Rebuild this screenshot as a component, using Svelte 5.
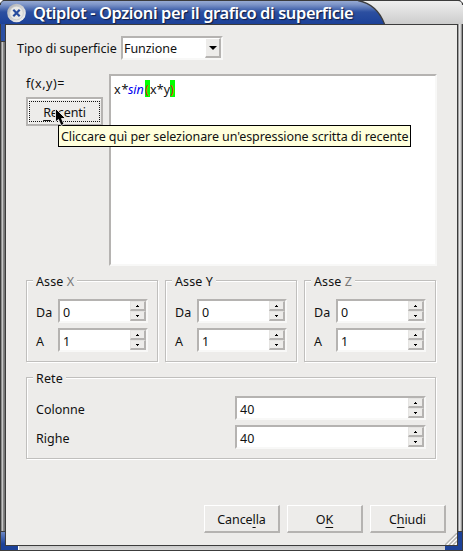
<script>
  const axes = ['X', 'Y', 'Z'];
  const grid = ['Colonne', 'Righe'];
</script>

{#snippet spin(value)}
  <div class="field spin">
    <span class="num">{value}</span>
    <div class="steps">
      <i><svg width="3" height="2" viewBox="0 0 3 2" shape-rendering="crispEdges"><path d="M1 0h1v1h1v1H0V1h1z" /></svg></i>
      <i><svg width="3" height="2" viewBox="0 0 3 2" shape-rendering="crispEdges"><path d="M0 0h3v1H2v1H1V1H0z" /></svg></i>
    </div>
  </div>
{/snippet}

<div class="window">
  <header>
    <svg class="tab" width="463" height="24" viewBox="0 0 463 24">
      <defs>
        <linearGradient id="blue" x1="0" y1="0" x2="0" y2="1">
          <stop offset="0" stop-color="#9eb0d6" />
          <stop offset=".2" stop-color="#7b93c7" />
          <stop offset=".5" stop-color="#2c4fa0" />
          <stop offset="1" stop-color="#1c4198" />
        </linearGradient>
        <linearGradient id="silver" x1="0" y1="0" x2="0" y2="1">
          <stop offset="0" stop-color="#f0f0f0" />
          <stop offset="1" stop-color="#cccccc" />
        </linearGradient>
        <linearGradient id="knob" x1="0" y1="0" x2="1" y2="1">
          <stop offset="0" stop-color="#a8aaae" />
          <stop offset="1" stop-color="#fafafa" />
        </linearGradient>
      </defs>
      <rect width="463" height="24" fill="url(#silver)" />
      <path d="M0 0H358C371 3 380 12 384.500 24H0z" fill="url(#blue)" />
      <path d="M358 .5C371 3 380 12 384.500 24" fill="none" stroke="#3c3c3c" stroke-width="1.300" />
      <circle cx="16.500" cy="13" r="9.300" fill="url(#knob)" />
      <circle cx="16.500" cy="13" r="6.800" fill="#e8e8e6" stroke="#c3c5c9" stroke-width=".7" />
      <path d="M13.300 9.800l6.400 6.400M19.700 9.800l-6.400 6.400" stroke="#264b9e" stroke-width="2.200" />
      <path d="M0 0H463V5H462C462 2 460.500 1 458 1H5C2 1 1 2 1 5H0z" fill="#3c3c3c" />
      <path d="M0 0H3L0 3zM463 0H460L463 3z" fill="#fff" />
    </svg>
    <h1>Qtiplot - Opzioni per il grafico di superficie</h1>
  </header>
  <div class="middle">
    <div class="edge left"></div>
    <main>
      <div class="type">
        <span class="type-label">Tipo di superficie</span>
        <div class="field combo">
          <span>Funzione</span>
          <b><svg width="8" height="4" viewBox="0 0 8 4"><path d="M0 0h8L4 4z" /></svg></b>
        </div>
      </div>
      <div class="formula">
        <div class="side">
          <span class="fxy">f(x,y)=</span>
          <button class="recent"><span><u>R</u>ecenti</span></button>
        </div>
        <div class="field editor"><span class="code"><span>x*</span><em>sin</em><mark>(</mark><span>x*y</span><mark>)</mark></span></div>
      </div>
      <div class="axes">
        {#each axes as axis}
          <section>
            <h2>Asse <span class:dim={axis !== 'Y'}>{axis}</span></h2>
            <div class="row"><span>Da</span>{@render spin(0)}</div>
            <div class="row"><span>A</span>{@render spin(1)}</div>
          </section>
        {/each}
      </div>
      <section class="net">
        <h2>Rete</h2>
        {#each grid as name}
          <div class="row"><span>{name}</span>{@render spin(40)}</div>
        {/each}
      </section>
      <footer>
        <button>Cance<u>l</u>la</button>
        <button>O<u>K</u></button>
        <button>C<u>h</u>iudi</button>
      </footer>
      <svg class="grip" width="12" height="12" viewBox="0 0 12 12">
        <path d="M0 12L12 0M4 12L12 4M8 12L12 8" stroke="#b4b3b1" stroke-width="1.300" />
        <path d="M2 12L12 2M6 12L12 6M10 12L12 10" stroke="#fff" />
      </svg>
    </main>
    <div class="edge right"></div>
  </div>
  <div class="bottom"></div>
  <div class="tip">Cliccare quì per selezionare un'espressione scritta di recente</div>
  <svg class="cursor" width="12" height="19" viewBox="0 0 12 19">
    <path d="M.5.5V14L3.500 11.500L6 17.500L9 16.200L6.500 10.500H10.500z" fill="#000" stroke="#fff" stroke-width=".8" />
  </svg>
</div>

<style>
  :global(body) { margin: 0; overflow: hidden; }
  .window {
    position: relative; width: 463px; height: 551px; box-sizing: border-box;
    display: flex; flex-direction: column; background: #edecea; overflow: hidden;
    font: 12.5px/16px 'Noto Sans', 'Open Sans', sans-serif; color: #111;
  }
  header { height: 24px; position: relative; flex: none; display: flex; }
  .tab { position: absolute; left: 0; top: 0; }
  h1 {
    position: relative; margin: 0 0 0 33px; font-size: 16.5px; line-height: 26px; font-weight: 600;
    color: #fff; white-space: nowrap; text-shadow: 1px 1px 1px #101c40; letter-spacing: -.42px;
  }
  .middle { flex: 1; display: flex; min-height: 0; }
  .edge { width: 5px; flex: none; box-sizing: border-box; }
  .left {
    border-left: 1px solid #3c3c3c;
    background: linear-gradient(#2a4fa3 0 17px, #3c3c3c 17px 18px, transparent 18px 507px, #3c3c3c 507px 508px, #6a86c4 508px, #1c4198 520px),
      linear-gradient(90deg, #8e8e8e 0 1px, #c6c6c6 1px 2px, #858585 2px 3px, #747474 3px);
  }
  .right {
    border-right: 1px solid #3c3c3c;
    background: linear-gradient(transparent 0 507px, #3c3c3c 507px 508px, #1c4198 508px),
      linear-gradient(90deg, #a0a0a0 0 1px, #e6e6e6 1px 2px, #d0d0d0 2px 3px, #989898 3px);
  }
  main {
    flex: 1; box-sizing: border-box; border: 1px solid #3c3c3c; position: relative;
    padding: 11px 21px 0 20px; display: flex; flex-direction: column;
  }
  .bottom {
    height: 5px; flex: none; box-sizing: border-box; border: solid #3c3c3c; border-width: 0 1px 1px;
    background: linear-gradient(90deg, #1c4198 0 17px, #fff 17px 18px, transparent 18px 444px, #1c4198 444px), linear-gradient(#c9c9c9, #d8d8d8);
  }
  .field {
    box-sizing: border-box; background: #fff; border: solid; border-width: 2px;
    border-color: #b5b3b1 #f8f8f7 #f8f8f7 #b5b3b1; display: flex;
  }
  .type { display: flex; height: 24px; margin-left: -9px; gap: 7px; }
  .type-label { width: 97px; line-height: 25px; white-space: nowrap; letter-spacing: -.03px; }
  .combo { width: 102px; line-height: 21px; justify-content: space-between; padding-left: 1px; letter-spacing: -.05px; }
  .combo b {
    width: 16px; box-sizing: border-box; background: #edecea; border: solid;
    border-width: 1px 2px 2px 1px; border-color: #fff #b5b3b1 #b5b3b1 #fff; display: grid; place-items: center;
  }
  .formula { display: flex; height: 192px; margin-top: 14px; }
  .side { width: 83px; flex: none; }
  .fxy { display: block; height: 23px; line-height: 20px; letter-spacing: .5px; }
  button {
    display: block; box-sizing: border-box; padding: 2px 0 0; width: 76px; height: 28px; background: #edecea;
    font: inherit; color: inherit; border: solid; border-width: 1px 2px 2px 1px;
    border-color: #fff #b5b3b1 #b5b3b1 #fff; letter-spacing: -.1px;
  }
  u { text-underline-offset: 3px; text-decoration-thickness: 1px; text-decoration-skip-ink: none; }
  .recent { width: 77px; height: 29px; border-width: 2px; border-color: #b5b3b1; padding: 1px; box-shadow: inset 1px 1px #fff; }
  .recent span { display: block; height: 21px; box-sizing: border-box; border: 1px dotted #111; line-height: 21px; }
  .editor { flex: 1; margin-right: -1px; }
  .code { margin: 4px 0 0 3px; height: 17px; display: flex; line-height: 19px; }
  .code em { color: #0000f0; letter-spacing: -.1px; width: 17px; }
  .code span { letter-spacing: .8px; }
  .code span:nth-of-type(1) { width: 14px; }
  .code span:nth-of-type(2) { width: 20px; letter-spacing: .1px; }
  mark { background: #00ff00; color: #e02020; width: 5px; }
  .axes { display: flex; gap: 7px; margin: 14px 0 0; }
  section {
    flex: 1; height: 82px; box-sizing: border-box; border: 1px solid #c0bfbd; box-shadow: 1px 1px #fff, inset 1px 1px #fff;
    padding: 0 9px; display: flex; flex-direction: column; gap: 5px;
  }
  h2 { font: inherit; margin: -8px 0 3px -3px; padding: 0 3px; width: max-content; height: 18px; line-height: 18px; background: #edecea; letter-spacing: .1px; }
  section .row { display: flex; height: 24px; line-height: 27px; justify-content: space-between; }
  .dim { color: #777; }
  .spin { width: 90px; height: 24px; justify-content: space-between; }
  .num { padding-left: 3px; line-height: 23px; }
  .steps { width: 16px; display: flex; flex-direction: column; }
  .steps i {
    height: 10px; box-sizing: border-box; background: #edecea; border: solid; border-width: 1px 2px 2px 1px;
    border-color: #e5e4e2 #b5b3b1 #b5b3b1 #e5e4e2; display: grid; place-items: center;
  }
  .net { flex: none; margin: 15px 0 0; }
  .net .spin { width: 191px; }
  footer { display: flex; gap: 7px; justify-content: flex-end; margin: 46px -10px 0 0; }
  .grip { position: absolute; right: 0; bottom: 0; }
  .tip {
    position: absolute; left: 58px; top: 125px; width: 353px; height: 22px; box-sizing: border-box;
    border: 1px solid #000; background: #ffffdc; padding-left: 2px; line-height: 21px; white-space: nowrap; letter-spacing: -.08px;
  }
  .cursor { position: absolute; left: 55px; top: 108px; }
</style>
